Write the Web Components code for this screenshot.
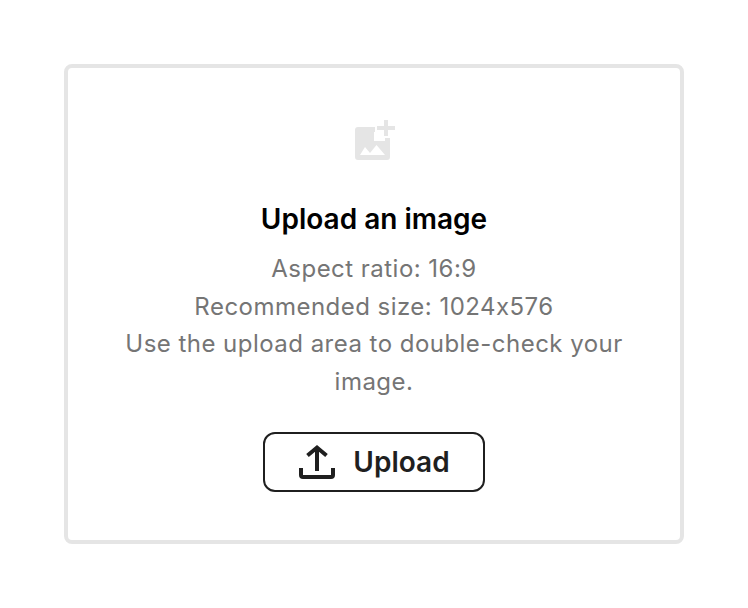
<!DOCTYPE html>
<html lang="en"><head><meta charset="utf-8"><title>Upload</title>
<style>html,body{margin:0;padding:0;background:#fff;font-family:Inter,"Liberation Sans",sans-serif}</style></head>
<body>
<upload-page>
  <upload-card>
    <span slot="title">Upload an image</span>
    <span>Aspect ratio: 16:9</span>
    <span>Recommended size: 1024<i style="font-style:normal;font-feature-settings:'calt' 0">x</i>576</span>
    <span>Use the upload area to double-check your image.</span>
    <upload-button slot="action">Upload</upload-button>
  </upload-card>
</upload-page>
<script>
class UploadPage extends HTMLElement{constructor(){super();this.attachShadow({mode:'open'}).innerHTML=`<style>:host{display:block;box-sizing:border-box;width:748px;height:608px;padding:64px}</style><slot></slot>`}}
class UploadCard extends HTMLElement{constructor(){super();this.attachShadow({mode:'open'}).innerHTML=`<style>
:host{display:flex;flex-direction:column;align-items:center;box-sizing:border-box;width:620px;height:480px;border:4px solid #e5e5e5;border-radius:8px;padding:50px 56px 0;text-align:center}
svg{display:block;width:48px;height:48px}
.title{margin-top:37px;font-size:28px;line-height:32px;font-weight:600;color:#000}
.body{margin-top:15px;display:flex;flex-direction:column;font-size:24px;line-height:37.5px;color:#757575;letter-spacing:.47px}
.action{margin-top:32px}
::slotted(span){display:block}
</style>
<svg viewBox="0 0 48 48" fill="#e5e5e5"><path d="M5 12a3 3 0 0 1 3-3h17v5h-1v9h11v-3h5v19a3 3 0 0 1-3 3H8a3 3 0 0 1-3-3z"/><path d="M34 2h4v6h7v4h-7v6h-4v-6h-7V8h7z"/><path fill="#fff" d="M10 37l5-8 5 6 6.500-8 8.500 10z"/></svg>
<div class="title"><slot name="title"></slot></div>
<div class="body"><slot></slot></div>
<div class="action"><slot name="action"></slot></div>`}}
class UploadButton extends HTMLElement{constructor(){super();this.attachShadow({mode:'open'}).innerHTML=`<style>
:host{display:inline-flex;align-items:center;justify-content:center;gap:18px;box-sizing:border-box;width:222px;height:60px;padding-left:1px;border:2px solid #1f1f1f;border-radius:12px;background:#fff;color:#1f1f1f;font-size:28px;font-weight:600;line-height:34px}
svg{display:block;width:36px;height:36px;fill:none;stroke:#1f1f1f;stroke-width:4}
</style>
<svg viewBox="0 0 36 36"><path d="M18 27V4M8.500 11.500 18 3.500l9.500 8"/><path d="M2 24v7a2 2 0 0 0 2 2h28a2 2 0 0 0 2-2v-7"/></svg>
<slot></slot>`}}
customElements.define('upload-page',UploadPage);
customElements.define('upload-card',UploadCard);
customElements.define('upload-button',UploadButton);
</script>
</body></html>
